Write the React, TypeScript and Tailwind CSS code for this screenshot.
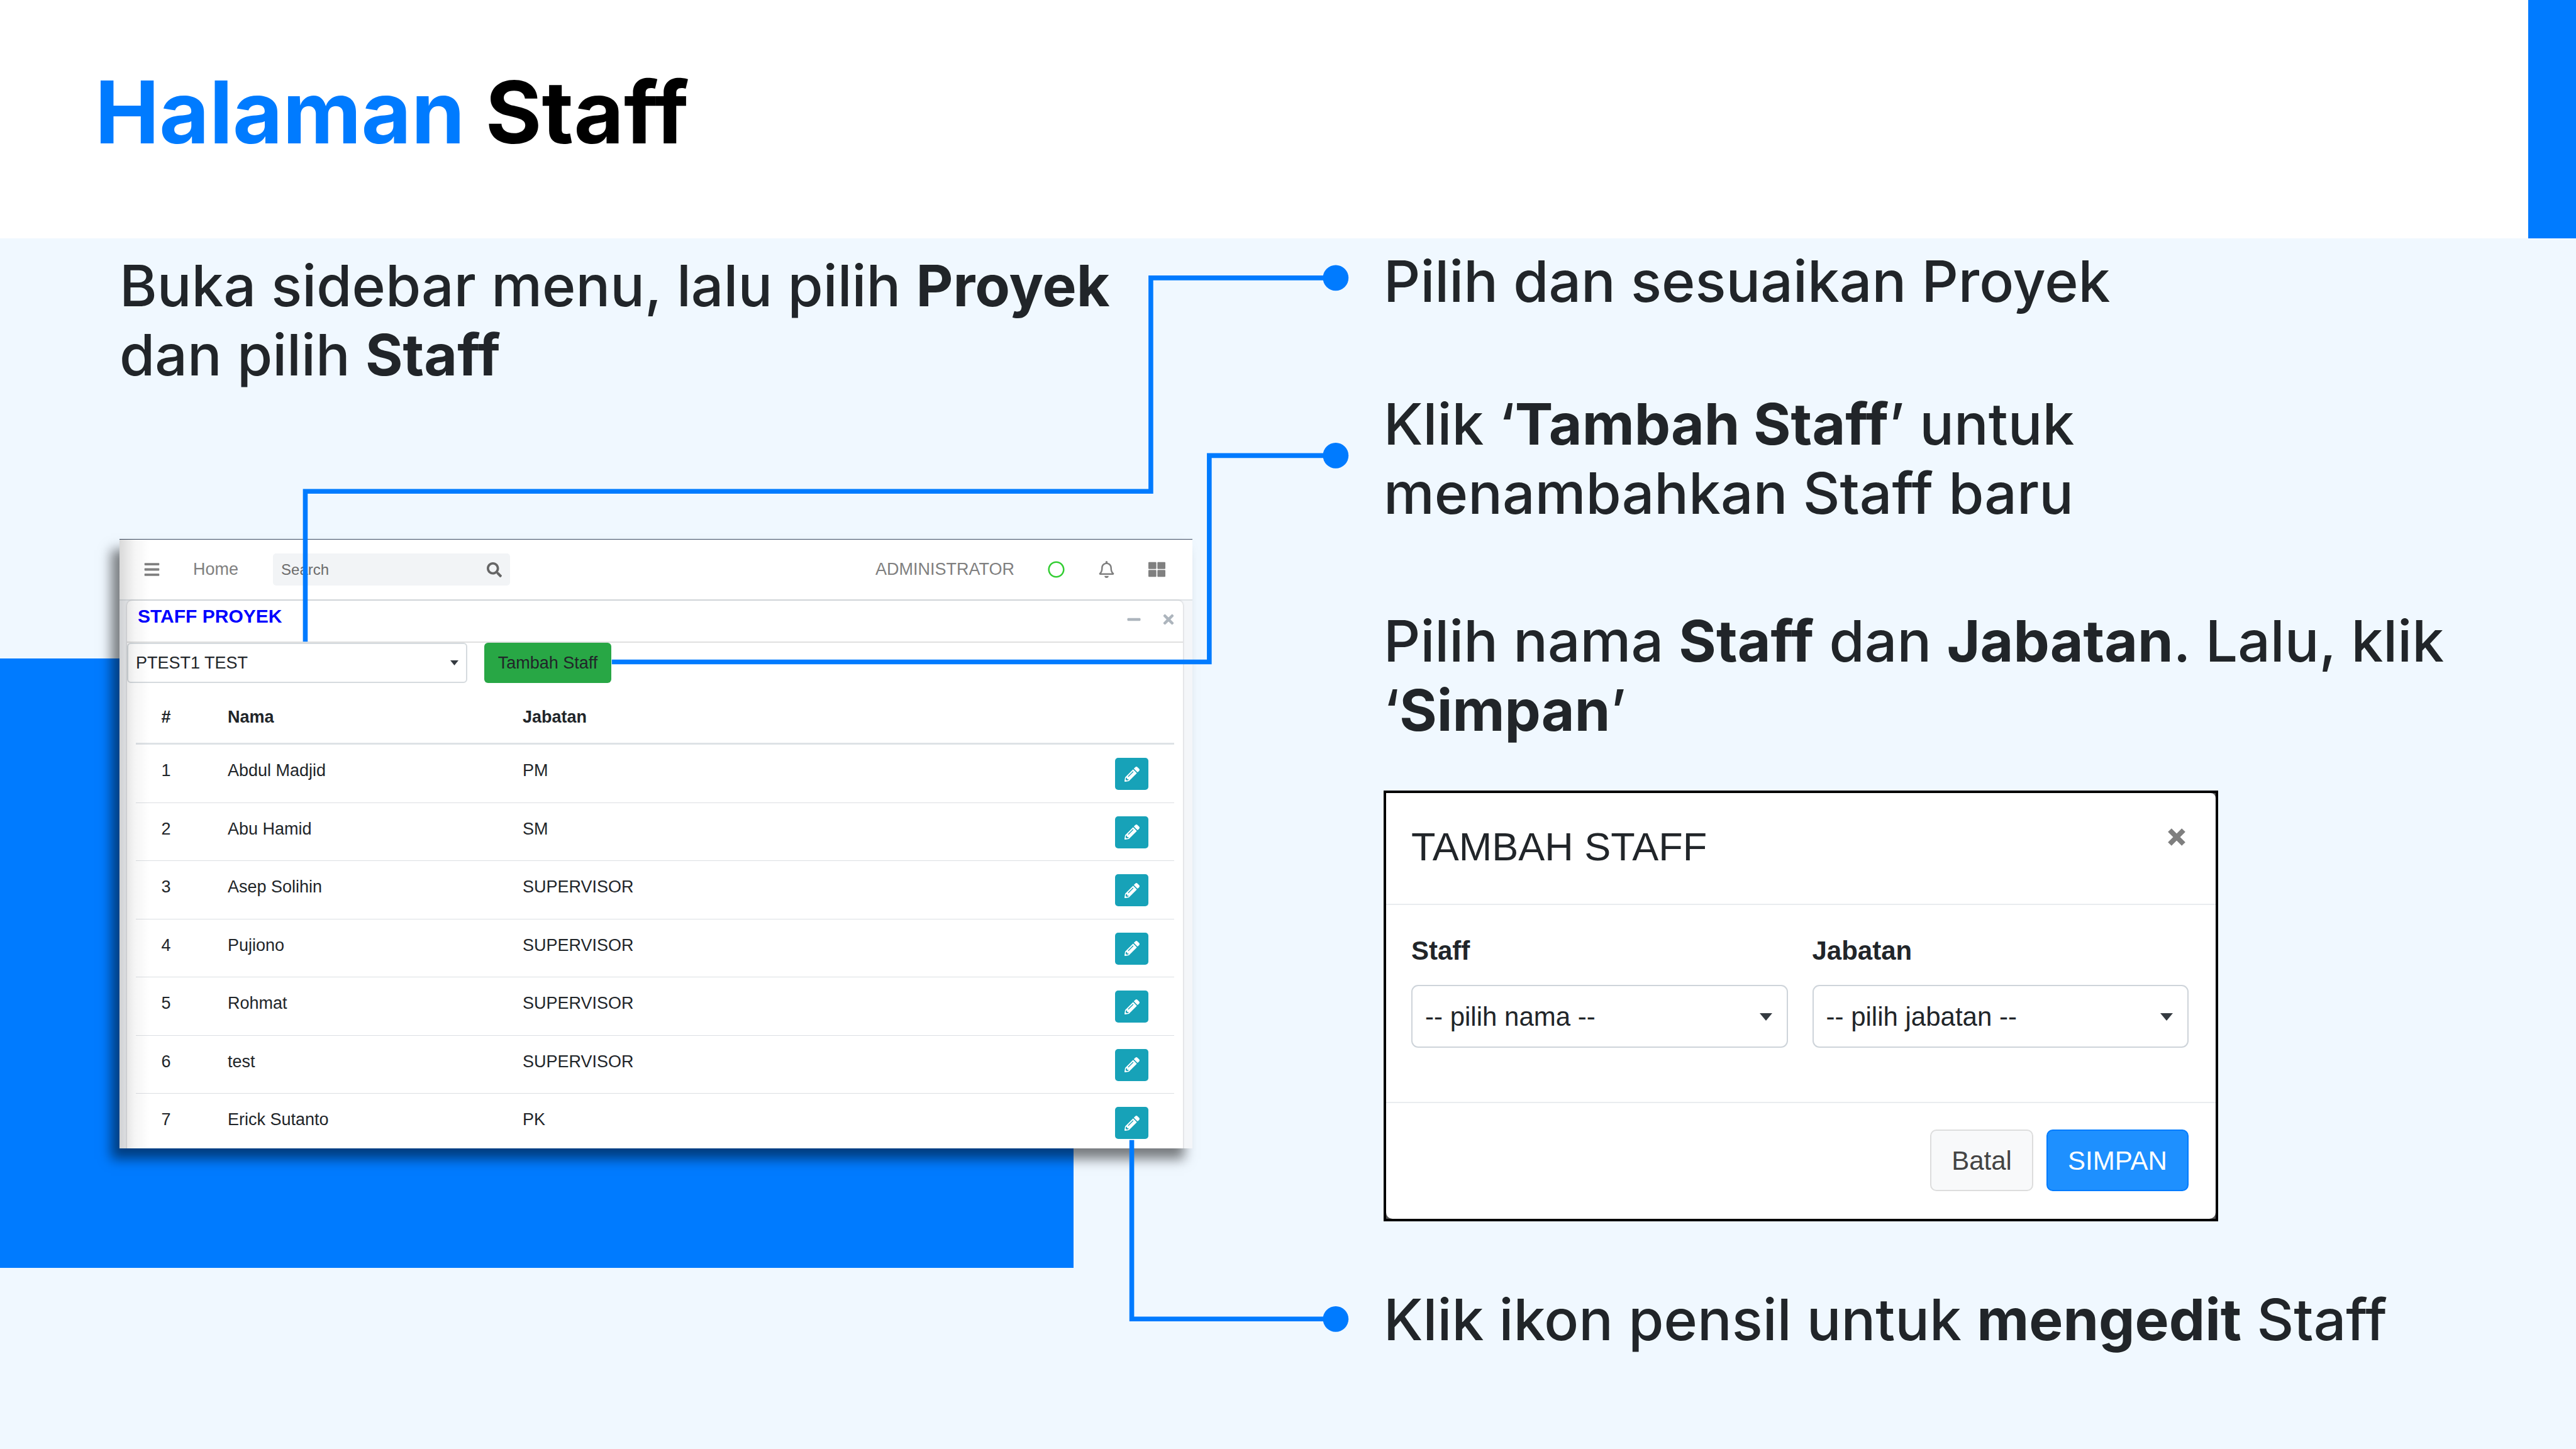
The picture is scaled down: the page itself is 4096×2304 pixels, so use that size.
import React from "react";
import {
  FaBars,
  FaMinus,
  FaPencilAlt,
  FaRegBell,
  FaRegCircle,
  FaSearch,
  FaThLarge,
  FaTimes,
} from "react-icons/fa";

const staff = [
  { name: "Abdul Madjid", role: "PM" },
  { name: "Abu Hamid", role: "SM" },
  { name: "Asep Solihin", role: "SUPERVISOR" },
  { name: "Pujiono", role: "SUPERVISOR" },
  { name: "Rohmat", role: "SUPERVISOR" },
  { name: "test", role: "SUPERVISOR" },
  { name: "Erick Sutanto", role: "PK" },
];

function Caret({ className }: { className: string }) {
  return (
    <svg viewBox="0 0 20 12" aria-hidden="true" className={className}>
      <path d="M0 0h20L10 12z" fill="#343a40" />
    </svg>
  );
}

function NavBar() {
  return (
    <nav className="flex h-[98px] items-center border-t border-b-2 border-t-[#3d4c63] border-b-[#dee2e6] bg-white pr-[43px] pl-[38px] text-[#808080]">
      <button type="button" aria-label="Menu" className="mr-[52px]">
        <FaBars />
      </button>
      <a href="#home" className="mr-[55px]">
        Home
      </a>
      <form className="flex h-[51px] w-[377px] items-center rounded-[5px] bg-[#f2f4f6] px-[13px] text-[24px] text-[#666666]">
        <input
          type="search"
          aria-label="Search"
          placeholder="Search"
          className="min-w-0 flex-1 bg-transparent outline-none placeholder:text-[#6b6b6b]"
        />
        <button type="button" aria-label="Cari">
          <FaSearch />
        </button>
      </form>
      <div className="ml-auto flex items-center gap-[53px]">
        <a href="#profile">ADMINISTRATOR</a>
        <FaRegCircle className="text-[#32cd32]" />
        <button type="button" aria-label="Notifikasi">
          <FaRegBell />
        </button>
        <button type="button" aria-label="Aplikasi">
          <FaThLarge />
        </button>
      </div>
    </nav>
  );
}

function StaffTable() {
  return (
    <table className="h-[733px] w-full table-fixed border-separate border-spacing-0 text-left">
      <colgroup>
        <col className="w-[96px]" />
        <col className="w-[469px]" />
        <col />
        <col className="w-[160px]" />
      </colgroup>
      <thead>
        <tr className="h-[85px]">
          <th className="border-b-3 border-[#dee2e6] text-center">#</th>
          <th className="border-b-3 border-[#dee2e6] pl-[50px]">Nama</th>
          <th className="border-b-3 border-[#dee2e6] pl-[50px]">Jabatan</th>
          <th className="border-b-3 border-[#dee2e6]" aria-label="Aksi" />
        </tr>
      </thead>
      <tbody className="align-top leading-[40px]">
        {staff.map((person, i) => (
          <tr key={person.name}>
            <td className="border-b border-[#dcdfe3] pt-[21px] text-center">{i + 1}</td>
            <td className="border-b border-[#dcdfe3] pt-[21px] pl-[50px]">{person.name}</td>
            <td className="border-b border-[#dcdfe3] pt-[21px] pl-[50px]">{person.role}</td>
            <td className="border-b border-[#dcdfe3] pt-[21px] pr-[41px]">
              <button
                type="button"
                aria-label={"Edit " + person.name}
                className="ml-auto flex h-[51px] w-[53px] items-center justify-center rounded-[5px] bg-[#17a2b8] text-[24px] text-white"
              >
                <FaPencilAlt />
              </button>
            </td>
          </tr>
        ))}
      </tbody>
    </table>
  );
}

function StaffWindow() {
  return (
    <section className="mr-[304px] shadow-[-13px_17px_18px_rgba(0,0,0,0.5)]">
      <div className="relative h-[969px] overflow-hidden bg-[#f4f6f9] font-['Liberation_Sans',Arial,sans-serif] text-[27px] leading-normal font-normal text-[#212529]">
        <NavBar />
        <div className="mr-[15px] ml-[12px] rounded-t-[8px] bg-white shadow-[0_0_3px_rgba(0,0,0,0.25)]">
          <header className="flex h-[67px] items-start justify-between border-b-2 border-[#e0e0e0] pt-[7px] pr-[11px] pl-[17px]">
            <h2 className="text-[30px] leading-[36px] font-bold text-[#0000ff]">STAFF PROYEK</h2>
            <div className="flex h-[46px] items-center gap-[31px] text-[24px] text-[#adb5bd]">
              <button type="button" aria-label="Kecilkan">
                <FaMinus />
              </button>
              <button type="button" aria-label="Tutup">
                <FaTimes />
              </button>
            </div>
          </header>
          <div className="flex gap-[27px]">
            <div className="relative w-[541px]">
              <select
                aria-label="Proyek"
                className="h-[64px] w-full appearance-none rounded-[6px] border-2 border-[#d5dade] bg-white pl-[12px]"
              >
                <option>PTEST1 TEST</option>
              </select>
              <Caret className="pointer-events-none absolute top-[28px] right-[14px] h-[8px] w-[13px]" />
            </div>
            <button type="button" className="h-[64px] w-[202px] rounded-[6px] bg-[#28a745]">
              Tambah Staff
            </button>
          </div>
          <div className="px-[14px] pt-[13px]">
            <StaffTable />
          </div>
        </div>
        <div className="pointer-events-none absolute inset-y-0 left-0 w-[48px] bg-linear-to-r from-black/15 via-black/4 to-transparent" />
      </div>
    </section>
  );
}

function Field({ id, label, option }: { id: string; label: string; option: string }) {
  return (
    <div className="flex-1">
      <label htmlFor={id} className="block leading-[64px] font-bold">
        {label}
      </label>
      <div className="relative mt-[22px]">
        <select
          id={id}
          className="h-[100px] w-full appearance-none rounded-[11px] border-2 border-[#ced4da] bg-white pl-[20px]"
        >
          <option>{option}</option>
        </select>
        <Caret className="pointer-events-none absolute top-[45px] right-[25px] h-[12px] w-[20px]" />
      </div>
    </div>
  );
}

function AddStaffDialog() {
  return (
    <section
      aria-label="TAMBAH STAFF"
      className="mr-[569px] border-4 border-black bg-[#555555] font-['Liberation_Sans',Arial,sans-serif] text-[42px] leading-normal font-normal text-[#212529]"
    >
      <div className="rounded-tr-[8px] rounded-b-[10px] bg-white">
        <header className="flex h-[178px] items-start justify-between border-b-2 border-[#e9ecef] pt-[45px] pr-[47px] pl-[40px]">
          <h2 className="text-[63px] leading-[80px]">TAMBAH STAFF</h2>
          <button type="button" aria-label="Tutup" className="pt-[10px]">
            <svg viewBox="0 0 30 30" className="h-[30px] w-[30px]">
              <path d="M4 4l22 22M26 4L4 26" stroke="#7f7f7f" strokeWidth="8" />
            </svg>
          </button>
        </header>
        <div className="flex h-[315px] gap-[39px] border-b-2 border-[#e9ecef] pt-[41px] pr-[43px] pl-[40px]">
          <Field id="staff" label="Staff" option="-- pilih nama --" />
          <Field id="jabatan" label="Jabatan" option="-- pilih jabatan --" />
        </div>
        <footer className="flex h-[184px] items-start justify-end gap-[21px] px-[43px] pt-[42px]">
          <button
            type="button"
            className="h-[98px] w-[164px] rounded-[10px] border-2 border-[#dddddd] bg-[#f8f9fa] text-[#444444]"
          >
            Batal
          </button>
          <button
            type="button"
            className="h-[98px] w-[226px] rounded-[10px] border-2 border-[#007bff] bg-[#1e90ff] text-white"
          >
            SIMPAN
          </button>
        </footer>
      </div>
    </section>
  );
}

// Connector lines from each control to the instruction that explains it.
function Connectors() {
  return (
    <svg
      viewBox="0 0 4320 2430"
      aria-hidden="true"
      className="pointer-events-none absolute top-0 left-0 w-full"
    >
      <g fill="none" stroke="#007bff" strokeWidth="8">
        <path d="M512 1076V824H1930V466H2240" />
        <path d="M1026 1110H2028V764H2240" />
        <path d="M1898 1912V2212H2240" />
      </g>
      <g fill="#007bff">
        <circle cx="2240" cy="466" r="21.5" />
        <circle cx="2240" cy="764" r="21.5" />
        <circle cx="2240" cy="2212" r="21.5" />
      </g>
    </svg>
  );
}

export default function App() {
  return (
    <div className="relative flex min-h-screen w-full flex-col overflow-hidden bg-[#f0f8ff] font-[Inter,sans-serif] [font-optical-sizing:none] [font-variant-ligatures:none]">
      <header className="flex h-[379px] items-start justify-between bg-white pl-[151px]">
        <h1 className="pt-[95px] text-[137px] leading-[166px] font-bold text-black">
          <span className="text-[#007bff]">Halaman</span> Staff
        </h1>
        <div className="h-full w-[76px] bg-[#007bff]" />
      </header>
      <div className="absolute top-[1047px] left-0 h-[969px] w-[1707px] bg-[#007bff]" />
      <main className="relative grid flex-1 grid-cols-[2200fr_1896fr] text-[91px] leading-[110px] font-medium text-[#212529]">
        <div className="pt-[20px] pl-[190px]">
          <p className="mb-[238px]">
            Buka sidebar menu, lalu pilih <b className="font-bold">Proyek</b>
            <br />
            dan pilih <b className="font-bold">Staff</b>
          </p>
          <StaffWindow />
        </div>
        <div className="pt-[13px]">
          <p>Pilih dan sesuaikan Proyek</p>
          <p className="mt-[117px]">
            Klik ‘<b className="font-bold">Tambah Staff</b>’ untuk
            <br />
            menambahkan Staff baru
          </p>
          <p className="mt-[125px] mb-[73px]">
            Pilih nama <b className="font-bold">Staff</b> dan <b className="font-bold">Jabatan</b>. Lalu, klik
            <br />‘<b className="font-bold">Simpan</b>’
          </p>
          <AddStaffDialog />
          <p className="mt-[101px]">
            Klik ikon pensil untuk <b className="font-bold">mengedit</b> Staff
          </p>
        </div>
      </main>
      <Connectors />
    </div>
  );
}
